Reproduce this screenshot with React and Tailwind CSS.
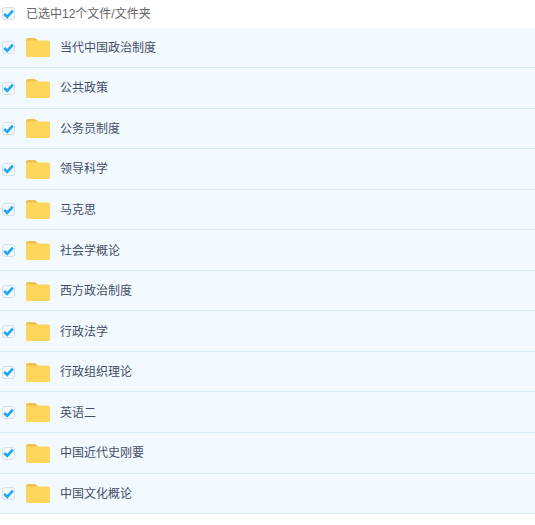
const folders = [
  "当代中国政治制度",
  "公共政策",
  "公务员制度",
  "领导科学",
  "马克思",
  "社会学概论",
  "西方政治制度",
  "行政法学",
  "行政组织理论",
  "英语二",
  "中国近代史刚要",
  "中国文化概论",
];

const Check = () => (
  <span className="flex h-[13px] w-[13px] shrink-0 items-center justify-center rounded-[3px] border border-[#d5e0ea] bg-[#f4f8fb]">
    <svg width="11" height="10" viewBox="0 0 11 10" fill="none">
      <path d="M1.2 5 L4.2 7.8 L9.8 1.6" stroke="#1aa7f5" strokeWidth="2.6" />
    </svg>
  </span>
);

const Folder = () => (
  <svg width="24" height="19" viewBox="0 0 24 19" className="block shrink-0">
    <path d="M0 2 Q0 0 2 0 H8 Q10 0 11 1.5 L12 3 V8 H0 Z" fill="#f0c04e" />
    <path d="M0 4 Q0 2.5 1.5 2.5 H22.5 Q24 2.5 24 4 V17.5 Q24 19 22.5 19 H1.5 Q0 19 0 17.5 Z" fill="#ffd65c" />
  </svg>
);

export default function App() {
  return (
    <div className="min-h-[525px] bg-white text-[12px] font-['Liberation_Sans','Noto_Sans_CJK_SC',sans-serif]">
      {/* Header */}
      <div className="flex h-[27.5px] items-center pl-[2px] text-[#666]">
        <Check />
        <span className="ml-[11px]">已选中12个文件/文件夹</span>
      </div>

      {/* Rows */}
      <ul>
        {folders.map((name) => (
          <li
            key={name}
            className="flex h-[40.55px] items-center border-b border-[#d6e9fa] bg-[#f3faff] pl-[2px] pt-[1px] text-[#424e67]"
          >
            <Check />
            <span className="ml-[11px]">
              <Folder />
            </span>
            <span className="ml-[10px]">{name}</span>
          </li>
        ))}
      </ul>
    </div>
  );
}
